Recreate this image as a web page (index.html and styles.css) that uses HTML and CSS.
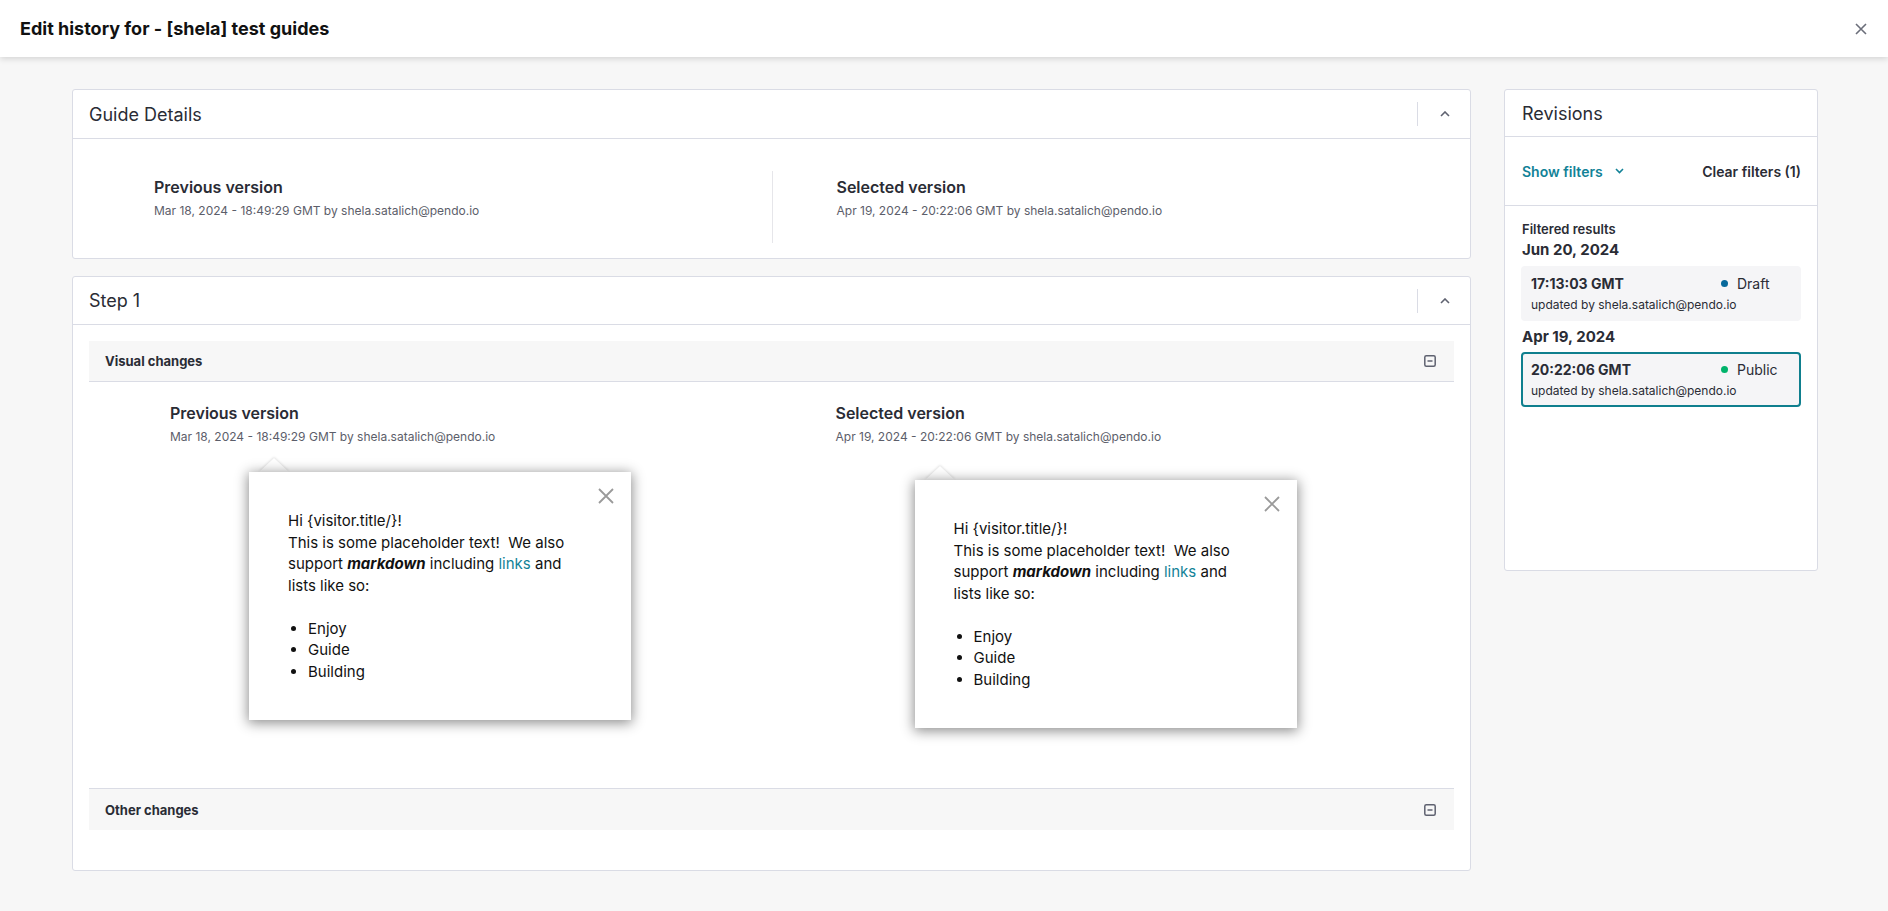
FILE: index.html
```html
<!DOCTYPE html>
<html lang="en">
<head>
  <meta charset="UTF-8" />
  <meta name="viewport" content="width=device-width, initial-scale=1" />
  <title>Edit history</title>
  <link rel="stylesheet" href="styles.css">
</head>
<body>
  <header class="topbar">
    <h1>Edit history for - [shela] test guides</h1>
    <button class="icon-btn close-btn" aria-label="Close">
      <svg width="12" height="12" viewBox="0 0 12 12"><path d="M1 1l10 10M11 1L1 11" stroke="#6b6e7a" stroke-width="1.6" fill="none"/></svg>
    </button>
  </header>

  <main class="layout">
    <div class="main-col">
      <!-- guide level details -->
      <section class="card">
        <div class="card-head">
          <h2>Guide Details</h2>
          <div class="head-actions">
            <span class="sep"></span>
            <svg width="10" height="6" viewBox="0 0 10 6"><path d="M1 5l4-4 4 4" stroke="#5f6270" stroke-width="1.6" fill="none"/></svg>
          </div>
        </div>
        <div class="details-body">
          <div class="version-col first">
            <h3>Previous version</h3>
            <p class="meta">Mar 18, 2024 - 18:49:29 GMT by shela.satalich@pendo.io</p>
          </div>
          <div class="version-col second divided">
            <h3>Selected version</h3>
            <p class="meta">Apr 19, 2024 - 20:22:06 GMT by shela.satalich@pendo.io</p>
          </div>
        </div>
      </section>

      <!-- per step changes -->
      <section class="card step-card">
        <div class="card-head">
          <h2>Step 1</h2>
          <div class="head-actions">
            <span class="sep"></span>
            <svg width="10" height="6" viewBox="0 0 10 6"><path d="M1 5l4-4 4 4" stroke="#5f6270" stroke-width="1.6" fill="none"/></svg>
          </div>
        </div>
        <div class="step-body">
          <div class="change-section visual">
            <div class="change-bar">
              <span>Visual changes</span>
              <svg width="12" height="12" viewBox="0 0 12 12"><rect x="0.8" y="0.8" width="10.4" height="10.4" rx="1.5" stroke="#5f6270" stroke-width="1.5" fill="none"/><path d="M3.5 6h5" stroke="#5f6270" stroke-width="1.5"/></svg>
            </div>
            <div class="compare">
              <div class="version-col first">
                <h3>Previous version</h3>
                <p class="meta">Mar 18, 2024 - 18:49:29 GMT by shela.satalich@pendo.io</p>
                <div class="guide-preview">
                  <span class="caret"></span>
                  <div class="guide-box">
                    <svg class="guide-close" width="16" height="16" viewBox="0 0 16 16"><path d="M1 1l14 14M15 1L1 15" stroke="#9a9a9a" stroke-width="1.8" fill="none"/></svg>
                    <p>Hi {visitor.title/}!<br>This is some placeholder text!&nbsp; We also support <strong><em>markdown</em></strong> including <a href="#">links</a> and lists like so:</p>
                    <ul>
                      <li>Enjoy</li>
                      <li>Guide</li>
                      <li>Building</li>
                    </ul>
                  </div>
                </div>
              </div>
              <div class="version-col second">
                <h3>Selected version</h3>
                <p class="meta">Apr 19, 2024 - 20:22:06 GMT by shela.satalich@pendo.io</p>
                <div class="guide-preview lower">
                  <span class="caret"></span>
                  <div class="guide-box">
                    <svg class="guide-close" width="16" height="16" viewBox="0 0 16 16"><path d="M1 1l14 14M15 1L1 15" stroke="#9a9a9a" stroke-width="1.8" fill="none"/></svg>
                    <p>Hi {visitor.title/}!<br>This is some placeholder text!&nbsp; We also support <strong><em>markdown</em></strong> including <a href="#">links</a> and lists like so:</p>
                    <ul>
                      <li>Enjoy</li>
                      <li>Guide</li>
                      <li>Building</li>
                    </ul>
                  </div>
                </div>
              </div>
            </div>
          </div>
          <div class="change-section other">
            <div class="change-bar">
              <span>Other changes</span>
              <svg width="12" height="12" viewBox="0 0 12 12"><rect x="0.8" y="0.8" width="10.4" height="10.4" rx="1.5" stroke="#5f6270" stroke-width="1.5" fill="none"/><path d="M3.5 6h5" stroke="#5f6270" stroke-width="1.5"/></svg>
            </div>
          </div>
        </div>
      </section>
    </div>

    <aside class="card revisions">
      <div class="card-head">
        <h2>Revisions</h2>
      </div>
      <div class="filter-row">
        <a class="show-filters" href="#">Show filters
          <svg width="9" height="6" viewBox="0 0 9 6"><path d="M1 1l3.5 3.5L8 1" stroke="#128297" stroke-width="1.6" fill="none"/></svg>
        </a>
        <span class="clear-filters">Clear filters (1)</span>
      </div>
      <div class="rev-list">
        <div class="rev-caption">Filtered results</div>
        <div class="rev-date">Jun 20, 2024</div>
        <div class="rev-item">
          <div class="rev-top">
            <span class="rev-time">17:13:03 GMT</span>
            <span class="status"><i class="dot draft"></i>Draft</span>
          </div>
          <div class="rev-by">updated by shela.satalich@pendo.io</div>
        </div>
        <div class="rev-date">Apr 19, 2024</div>
        <div class="rev-item selected">
          <div class="rev-top">
            <span class="rev-time">20:22:06 GMT</span>
            <span class="status"><i class="dot public"></i>Public</span>
          </div>
          <div class="rev-by">updated by shela.satalich@pendo.io</div>
        </div>
      </div>
    </aside>
  </main>
</body>
</html>
```

FILE: styles.css
```css
* {
  box-sizing: border-box;
}
body {
  margin: 0;
  font-family: Inter, "Noto Sans", sans-serif;
  background: #f7f7f7;
  color: #2a2c35;
}
h1, h2, h3, p {
  margin: 0;
}
.icon-btn {
  background: none;
  border: none;
  padding: 0;
  display: flex;
  cursor: pointer;
}

/* top bar */
.topbar {
  height: 57px;
  background: #fff;
  display: flex;
  align-items: center;
  justify-content: space-between;
  padding: 0 21px 0 20px;
  box-shadow: 0 2px 6px rgba(0,0,0,0.14);
  position: relative;
}
.topbar h1 {
  font-size: 18px;
  font-weight: 700;
  color: #111;
}

.layout {
  display: flex;
  align-items: flex-start;
  gap: 33px;
  padding: 32px 70px 40px 72px;
}
.main-col {
  flex: 1;
  display: flex;
  flex-direction: column;
  gap: 17px;
}

.card {
  background: #fff;
  border: 1px solid #dadce5;
  border-radius: 3px;
}
.card-head {
  height: 49px;
  border-bottom: 1px solid #dadce5;
  display: flex;
  align-items: center;
  justify-content: space-between;
  padding: 0 20px 0 16px;
}
.step-card .card-head {
  height: 48px;
}
.card-head h2 {
  font-size: 18px;
  font-weight: 400;
  color: #2a2c35;
}
.head-actions {
  display: flex;
  align-items: center;
  gap: 22px;
}
.sep {
  width: 1px;
  height: 24px;
  background: #dadce5;
}

/* version columns */
.details-body {
  display: grid;
  grid-template-columns: 1fr 1fr;
  padding: 32px 0 15px;
}
.version-col {
  padding-top: 6px;
}
.details-body .version-col {
  height: 72px;
}
.version-col.first {
  padding-left: 81px;
}
.version-col.second {
  padding-left: 64px;
}
.version-col.divided {
  border-left: 1px solid #e6e6ea;
}
.version-col h3 {
  font-size: 16px;
  font-weight: 600;
  line-height: 20px;
  color: #2a2c35;
}
.meta {
  font-size: 12px;
  line-height: 16px;
  color: #5c5e6a;
  margin-top: 6px;
}

/* step changes */
.step-body {
  padding: 16px 16px 40px;
}
.change-bar {
  height: 41px;
  background: #f7f7f7;
  display: flex;
  align-items: center;
  justify-content: space-between;
  padding: 0 18px 0 16px;
  font-size: 13px;
  font-weight: 700;
  color: #2a2c35;
}
.visual .change-bar {
  border-bottom: 1px solid #dadce5;
}
.visual {
  border-bottom: 1px solid #dadce5;
}
.compare {
  display: grid;
  grid-template-columns: 1fr 1fr;
  align-items: start;
  padding: 15px 0 60px;
}

/* guide preview bubble */
.guide-preview {
  margin: 13px 0 0 79px;
  width: 382px;
}
.guide-preview.lower {
  margin-top: 21px;
}
.caret {
  display: block;
  width: 0;
  height: 0;
  margin-left: 10px;
  border-left: 15px solid transparent;
  border-right: 15px solid transparent;
  border-bottom: 14px solid #fff;
  filter: drop-shadow(0 -1px 1px rgba(0,0,0,0.12));
}
.guide-box {
  position: relative;
  background: #fff;
  box-shadow: 0 2px 12px 1px rgba(0,0,0,0.45);
  padding: 38px 40px 38px 39px;
  font-size: 15px;
  line-height: 21.5px;
  color: #111;
}
.guide-close {
  position: absolute;
  top: 16px;
  right: 17px;
}
.guide-box a {
  color: #128297;
  text-decoration: none;
}
.guide-box ul {
  margin: 21.5px 0 0;
  padding-left: 20px;
}

/* revisions panel */
.revisions {
  width: 314px;
  height: 482px;
  flex-shrink: 0;
}
.revisions .card-head {
  height: 47px;
  padding-left: 17px;
}
.filter-row {
  height: 69px;
  border-bottom: 1px solid #dadce5;
  display: flex;
  align-items: center;
  justify-content: space-between;
  padding: 0 16px 0 17px;
  font-size: 14px;
  font-weight: 600;
}
.show-filters {
  color: #128297;
  text-decoration: none;
  display: flex;
  align-items: center;
  gap: 12px;
}
.clear-filters {
  color: #2a2c35;
}
.rev-list {
  padding: 14px 16px 0 17px;
}
.rev-caption {
  font-size: 13px;
  font-weight: 600;
  line-height: 18px;
}
.rev-date {
  font-size: 15px;
  font-weight: 700;
  line-height: 20px;
  margin: 2px 0 6px;
}
.rev-item + .rev-date {
  margin-top: 6px;
  margin-bottom: 5px;
}
.rev-item {
  background: #f5f5f7;
  border: 2px solid transparent;
  border-radius: 4px;
  padding: 6px 8px;
  margin-left: -1px;
}
.rev-item.selected {
  border-color: #0f7f8e;
}
.rev-top {
  display: flex;
  justify-content: space-between;
  align-items: center;
  height: 18px;
}
.rev-time {
  font-size: 14px;
  font-weight: 700;
}
.status {
  width: 70px;
  display: flex;
  align-items: center;
  gap: 9px;
  font-size: 14px;
}
.dot {
  width: 7px;
  height: 7px;
  border-radius: 50%;
}
.dot.draft {
  background: #07699b;
}
.dot.public {
  background: #00b36b;
}
.rev-by {
  font-size: 12px;
  line-height: 16px;
  margin-top: 5px;
  color: #2a2c35;
}
```
